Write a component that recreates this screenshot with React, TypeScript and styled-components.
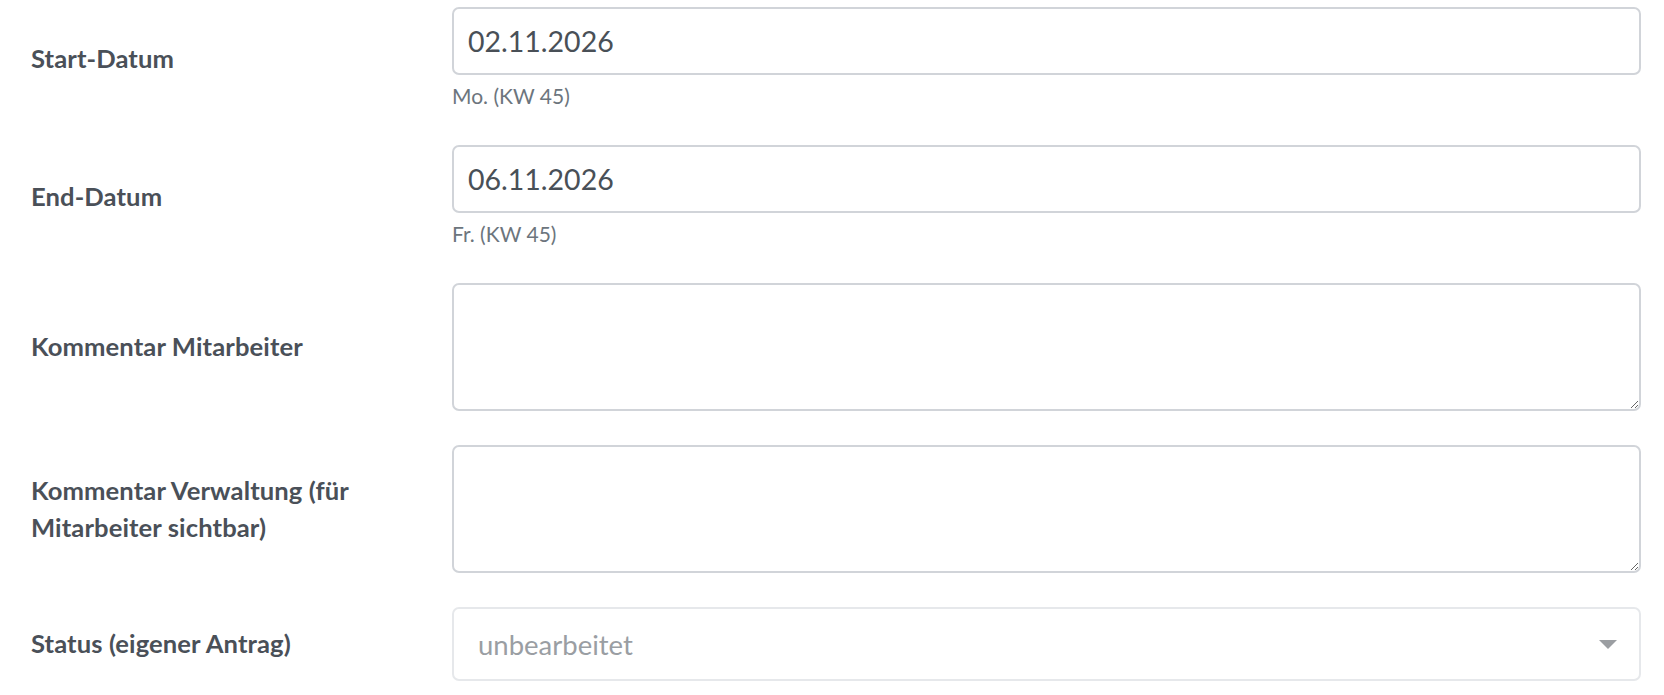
import React from 'react';
import styled, { createGlobalStyle } from 'styled-components';

const GlobalStyle = createGlobalStyle`
  html, body {
    margin: 0;
    padding: 0;
    background: #ffffff;
  }
  body {
    font-family: Lato, 'Noto Sans', 'Liberation Sans', sans-serif;
    color: #495057;
  }
`;

const Form = styled.form`
  padding: 7px 23px 0 31px;
`;

const FormGroup = styled.div`
  display: grid;
  grid-template-columns: 421px 1fr;
  align-items: center;
  margin-bottom: 34px;
`;

const Label = styled.label`
  font-size: 25.6px;
  line-height: 37.5px;
  font-weight: 700;
  letter-spacing: 0.1px;
  color: #4a5058;
  padding-right: 30px;
`;

const Field = styled.div`
  display: flex;
  flex-direction: column;
  min-width: 0;
`;

const Input = styled.input`
  box-sizing: border-box;
  width: 100%;
  height: 68px;
  padding: 0 14px;
  font-family: inherit;
  font-size: 28.5px;
  color: #495057;
  background: #fff;
  border: 2px solid #d1d4d9;
  border-radius: 7px;
  outline: none;
`;

const Help = styled.small`
  display: block;
  margin-top: 5px;
  font-size: 21px;
  line-height: 31px;
  color: #6c757d;
`;

const TextArea = styled.textarea`
  box-sizing: border-box;
  display: block;
  width: 100%;
  height: 128px;
  padding: 10px 14px;
  font-family: inherit;
  font-size: 28.5px;
  color: #495057;
  background: #fff;
  border: 2px solid #d1d4d9;
  border-radius: 7px;
  outline: none;
  resize: vertical;
`;

const Select = styled.div`
  box-sizing: border-box;
  height: 74px;
  display: flex;
  align-items: center;
  justify-content: space-between;
  padding: 0 22px 0 24px;
  border: 2px solid #e6e8eb;
  border-radius: 7px;
  background: #fff;
  cursor: not-allowed;
`;

const SelectValue = styled.span`
  font-size: 27.5px;
  color: #9a9ea3;
`;

const Caret = () => (
  <svg width="18" height="9" viewBox="0 0 18 9" aria-hidden="true">
    <path d="M0 0 H18 L9 9 Z" fill="#9b9ea2" />
  </svg>
);

export default function App() {
  return (
    <>
      <GlobalStyle />
      <Form onSubmit={(e) => e.preventDefault()}>
        <FormGroup>
          <Label htmlFor="start">Start-Datum</Label>
          <Field>
            <Input id="start" defaultValue="02.11.2026" />
            <Help>Mo. (KW 45)</Help>
          </Field>
        </FormGroup>
        <FormGroup>
          <Label htmlFor="end">End-Datum</Label>
          <Field>
            <Input id="end" defaultValue="06.11.2026" />
            <Help>Fr. (KW 45)</Help>
          </Field>
        </FormGroup>
        <FormGroup>
          <Label htmlFor="km">Kommentar Mitarbeiter</Label>
          <Field>
            <TextArea id="km" />
          </Field>
        </FormGroup>
        <FormGroup>
          <Label htmlFor="kv">Kommentar Verwaltung (für Mitarbeiter sichtbar)</Label>
          <Field>
            <TextArea id="kv" />
          </Field>
        </FormGroup>
        <FormGroup>
          <Label>Status (eigener Antrag)</Label>
          <Field>
            <Select role="combobox" aria-disabled="true">
              <SelectValue>unbearbeitet</SelectValue>
              <Caret />
            </Select>
          </Field>
        </FormGroup>
      </Form>
    </>
  );
}
